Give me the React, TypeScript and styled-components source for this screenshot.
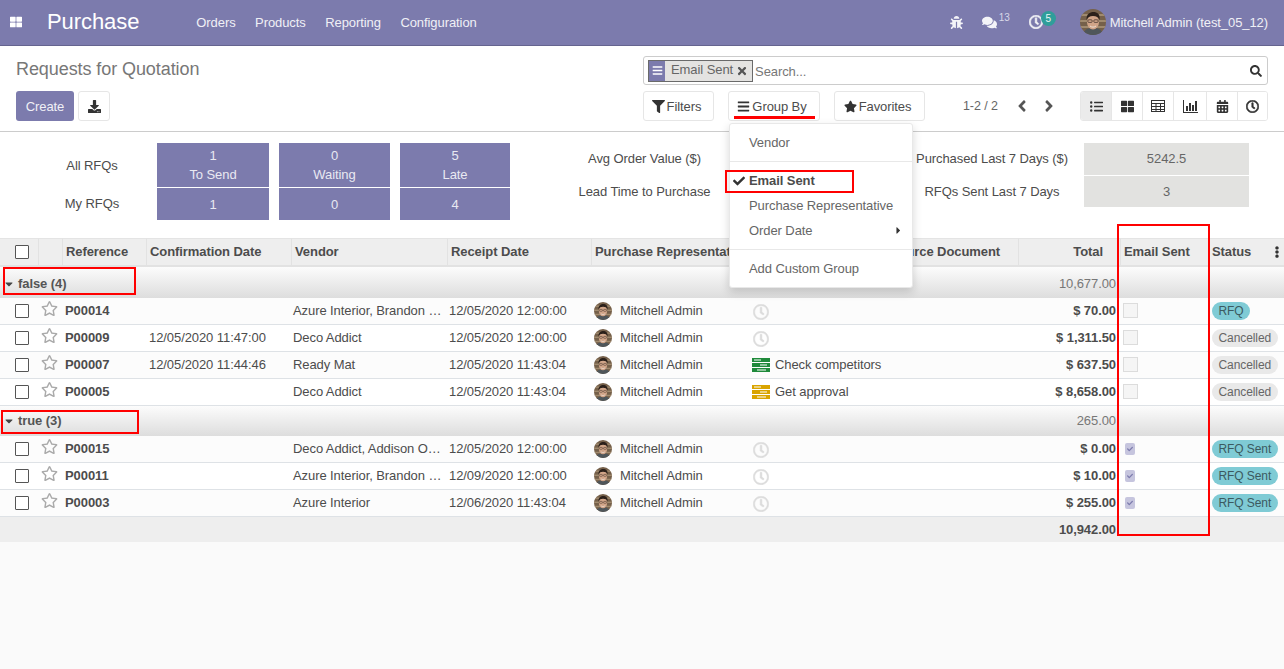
import React from 'react';
import styled, { createGlobalStyle } from 'styled-components';
import {
  FaAngleLeft,
  FaAngleRight,
  FaBars,
  FaBug,
  FaCalendarAlt,
  FaCaretDown,
  FaCaretRight,
  FaCheck,
  FaComments,
  FaDownload,
  FaEllipsisV,
  FaFilter,
  FaListUl,
  FaRegClock,
  FaRegStar,
  FaSearch,
  FaStar,
  FaThLarge,
  FaTimes,
} from 'react-icons/fa';

const PURPLE = '#7c7bad';

const GlobalStyle = createGlobalStyle`
  html, body {
    margin: 0;
    padding: 0;
    background: #fafafa;
    font-family: "Liberation Sans", Arial, sans-serif;
    font-size: 13px;
    letter-spacing: -0.08px;
    color: #4c4c4c;
  }
  * { box-sizing: border-box; }
`;

const Page = styled.div`
  position: relative;
  width: 1284px;
  height: 669px;
  overflow: hidden;
`;

const Navbar = styled.header`
  display: flex;
  align-items: center;
  height: 46px;
  padding: 0 16px 1px 10px;
  background: ${PURPLE};
  border-bottom: 1px solid #65648f;
  color: #fff;
`;

const AppsIcon = styled(FaThLarge)`
  font-size: 12px;
  width: 12px;
  flex: none;
`;

const Brand = styled.span`
  margin: 0 57px 0 25px;
  font-size: 22px;
  line-height: 1;
`;

const NavMenu = styled.nav`
  display: flex;
  gap: 19.500px;
  color: #f0f0f6;
`;

const NavRight = styled.div`
  display: flex;
  align-items: center;
  margin-left: auto;
  color: #f4f4f8;
`;

const NavIcon = styled.span<{ $w: number; $size: number }>`
  display: flex;
  align-items: center;
  position: relative;
  width: ${p => p.$w}px;
  font-size: ${p => p.$size}px;
`;

const Sup = styled.span`
  margin: -9px 0 0 2px;
  font-size: 10px;
  color: #d8d8e8;
`;

const BoldClock = styled(FaRegClock)`
  stroke: currentColor;
  stroke-width: 24px;
`;

const Badge = styled.span`
  position: absolute;
  left: 12px;
  top: -4px;
  width: 15px;
  height: 15px;
  border-radius: 50%;
  background: #2f9e9a;
  color: #e8f6f5;
  font-size: 10px;
  line-height: 15px;
  text-align: center;
`;

const UserName = styled.span`
  margin-left: 4px;
  color: #f0f0f6;
`;

const AvatarSvg = styled.svg`
  display: block;
  flex: none;
  border-radius: 50%;
`;

const Avatar = ({ size }: { size: number }) => (
  <AvatarSvg width={size} height={size} viewBox="0 0 26 26">
    <rect width="26" height="26" fill="#75604a" />
    <rect x="0" y="5" width="26" height="2" fill="#a08a6e" />
    <rect x="0" y="11" width="26" height="2" fill="#a08a6e" />
    <rect x="0" y="17" width="26" height="2" fill="#a08a6e" />
    <path d="M3 26c1-6 5-7 10-7s9 1 10 7z" fill="#4f565a" />
    <ellipse cx="13" cy="13" rx="6" ry="7.600" fill="#d0a488" />
    <path d="M6.600 11C6 5 10 3 13.500 3s7 2 6 8c-1-3-3-4-6.500-4S8 8 6.600 11z" fill="#2b201a" />
    <rect x="7.800" y="10.800" width="4.400" height="2.600" rx="1" fill="none" stroke="#3a2d26" strokeWidth="0.700" />
    <rect x="13.800" y="10.800" width="4.400" height="2.600" rx="1" fill="none" stroke="#3a2d26" strokeWidth="0.700" />
    <path d="M10 17c2 1.500 4 1.500 6 0" fill="none" stroke="#f4efe9" strokeWidth="0.800" />
  </AvatarSvg>
);

const ControlPanel = styled.section`
  display: grid;
  grid-template-columns: 627px 625px;
  height: 86px;
  padding: 10px 16px 0;
  background: #fff;
  border-bottom: 1px solid #ccc;
`;

const LeftColumn = styled.div`
  display: flex;
  flex-direction: column;
`;

const Title = styled.h1`
  margin: 0;
  height: 35px;
  padding-top: 3px;
  font-size: 18px;
  line-height: 20px;
  font-weight: normal;
  color: #777;
`;

const ButtonRow = styled.div`
  display: flex;
  align-items: center;
  gap: 4px;
`;

const PrimaryButton = styled.button`
  width: 58px;
  height: 30px;
  padding: 0;
  border: none;
  border-radius: 3px;
  background: ${PURPLE};
  color: #f0f0f6;
  font: inherit;
  letter-spacing: inherit;
`;

const Button = styled.button<{ $w: number }>`
  position: relative;
  display: flex;
  align-items: center;
  justify-content: center;
  gap: 2px;
  width: ${p => p.$w}px;
  height: 30px;
  padding: 0;
  border: 1px solid #e6e6e6;
  border-radius: 3px;
  background: #fff;
  color: #4c4c4c;
  font: inherit;
  letter-spacing: inherit;
  svg { font-size: 13px; color: #333; }
`;

const FilterButton = styled(Button)`
  padding-right: 4px;
`;

const SearchBox = styled.div`
  display: flex;
  align-items: center;
  height: 29px;
  padding: 0 4px;
  margin-bottom: 6px;
  background: #fff;
  border: 1px solid #ccc;
  border-radius: 3px;
`;

const Facet = styled.div`
  display: flex;
  align-items: stretch;
  height: 22px;
  border: 1px solid #6a6a6a;
  flex: none;
`;

const FacetIcon = styled.span`
  display: flex;
  align-items: center;
  justify-content: center;
  width: 16px;
  background: ${PURPLE};
  color: #fff;
  font-size: 11px;
`;

const FacetValue = styled.span`
  display: flex;
  align-items: center;
  gap: 3px;
  padding: 0 4px 2px 6px;
  background: #e4e3e1;
  color: #666;
  svg { font-size: 12px; margin-top: 3px; color: #555; }
`;

const SearchInput = styled.input`
  flex: 1;
  min-width: 0;
  height: 22px;
  padding: 2px 0 0 2px;
  border: none;
  outline: none;
  background: transparent;
  font: inherit;
  letter-spacing: inherit;
  &::placeholder { color: #777; opacity: 1; }
`;

const SearchIcon = styled(FaSearch)`
  margin-right: 1px;
  font-size: 12px;
  color: #333;
`;

const Controls = styled.div`
  display: flex;
  align-items: center;
`;

const FilterGroup = styled.div`
  display: flex;
  gap: 14px;
`;

const Pager = styled.div`
  display: flex;
  align-items: center;
  margin: 0 0 0 38px;
  color: #666;
  svg { font-size: 18px; color: #555; }
`;

const PagerText = styled.span`
  width: 36px;
  margin-right: 14px;
  font-size: 12.500px;
  white-space: nowrap;
  padding-bottom: 1px;
`;

const PagerArrow = styled.span`
  display: flex;
  width: 27px;
`;

const Underline = styled.span`
  position: absolute;
  left: 5px;
  right: 4px;
  bottom: 1px;
  height: 3px;
  background: #f00;
`;

const ViewSwitcher = styled.div`
  display: flex;
  margin-left: auto;
  height: 30px;
  border: 1px solid #e6e6e6;
  border-radius: 3px;
  overflow: hidden;
`;

const ViewButton = styled.span<{ $w: number; $active?: boolean }>`
  display: flex;
  align-items: center;
  justify-content: center;
  width: ${p => p.$w}px;
  background: ${p => (p.$active ? '#ebebeb' : '#fff')};
  border-right: 1px solid #e6e6e6;
  color: #333;
  font-size: 13px;
  &:last-child { border-right: none; }
`;

const TableGlyph = () => (
  <svg width="14" height="12" viewBox="0 0 14 12" fill="none" stroke="#333" strokeWidth="1">
    <rect x="0.500" y="0.500" width="13" height="11" />
    <path d="M0 3.500h14M0 6.500h14M0 9.500h14M5 3v9M9.500 3v9" />
  </svg>
);

const ChartGlyph = () => (
  <svg width="15" height="13" viewBox="0 0 15 13" fill="#333">
    <rect x="0" y="0" width="1" height="13" />
    <rect x="0" y="12" width="15" height="1" />
    <rect x="3" y="6" width="2" height="5" />
    <rect x="6" y="3" width="2" height="8" />
    <rect x="9" y="5" width="2" height="6" />
    <rect x="12" y="1" width="2" height="10" />
  </svg>
);

const Menu = styled.div`
  position: absolute;
  top: 31px;
  left: 0;
  z-index: 5;
  width: 184px;
  height: 165px;
  padding: 6px 0;
  background: #fff;
  border: 1px solid #e8e8e8;
  border-radius: 3px;
  box-shadow: 0 4px 10px rgba(0, 0, 0, 0.16);
  text-align: left;
`;

const MenuItem = styled.div<{ $selected?: boolean }>`
  position: relative;
  display: flex;
  align-items: center;
  height: 25px;
  padding-left: 19px;
  font-weight: ${p => (p.$selected ? 'bold' : 'normal')};
  color: ${p => (p.$selected ? '#4c4c4c' : '#666')};
`;

const MenuDivider = styled.div`
  height: 1px;
  margin: 6px 0;
  background: #e8e8e8;
`;

const MenuCheck = styled(FaCheck)`
  position: absolute;
  left: 3px;
  top: 7px;
  color: #4c4c4c;
  && { font-size: 12px; }
`;

const MenuCaret = styled(FaCaretRight)`
  position: absolute;
  right: 8px;
  top: 7px;
  color: #555;
  && { font-size: 11px; }
`;

const Dashboard = styled.section`
  display: flex;
  height: 106px;
  padding-top: 11px;
  background: #fff;
`;

const RfqGrid = styled.div`
  display: grid;
  grid-template-columns: 147px 112px 111px 110px;
  grid-template-rows: 44px 32px;
  column-gap: 10px;
  row-gap: 1px;
  width: 540px;
`;

const RfqLabel = styled.div<{ $lift?: number }>`
  display: flex;
  align-items: center;
  justify-content: center;
  padding: 0 0 ${p => p.$lift ?? 0}px 37px;
`;

const RfqCell = styled.div`
  display: flex;
  flex-direction: column;
  align-items: center;
  justify-content: center;
  background: ${PURPLE};
  color: #e9e9f2;
  line-height: 19px;
`;

const StatsGrid = styled.div`
  display: grid;
  grid-template-columns: 209px 151px 184px 165px;
  grid-template-rows: 32px 31px;
  row-gap: 1px;
`;

const StatLabel = styled.div<{ $lift?: number }>`
  display: flex;
  align-items: center;
  justify-content: center;
  padding-bottom: ${p => p.$lift ?? 0}px;
`;

const StatValue = styled(StatLabel)`
  background: #e2e2e0;
  color: #666;
`;

const Table = styled.table`
  width: 1284px;
  table-layout: fixed;
  border-collapse: separate;
  border-spacing: 0;
`;

const HeadCell = styled.th<{ $right?: boolean; $pad?: number }>`
  height: 29px;
  padding: 0 ${p => p.$pad ?? 3}px 1px 3px;
  background: #eee;
  border-top: 1px solid #e4e4e4;
  border-bottom: 2px solid #e2e2e2;
  border-left: 1px solid #e2e2e2;
  font-weight: bold;
  text-align: ${p => (p.$right ? 'right' : 'left')};
  white-space: nowrap;
  overflow: hidden;
  color: #4c4c4c;
  &:first-child { border-left: none; padding-left: 0; }
`;

const HeadInner = styled.div`
  display: flex;
  justify-content: space-between;
  align-items: center;
`;

const Kebab = styled(FaEllipsisV)`
  font-size: 12px;
  color: #333;
`;

const GroupRow = styled.tr<{ $h: number }>`
  height: ${p => p.$h}px;
  background: linear-gradient(#fcfcfc, #dddddd);
  td { padding-bottom: ${p => (p.$h > 30 ? 0 : 2)}px; }
`;

const GroupName = styled.td`
  padding-left: 3px;
  font-weight: bold;
  color: #555;
  svg { font-size: 12px; margin-right: 3px; vertical-align: -2px; color: #444; }
`;

const GroupTotal = styled.td`
  padding-right: 4px;
  text-align: right;
  color: #777;
`;

const Row = styled.tr<{ $odd: boolean }>`
  height: 27px;
  background: ${p => (p.$odd ? '#fcfcfc' : '#fff')};
`;

const Cell = styled.td<{ $right?: boolean; $bold?: boolean; $pad?: number }>`
  padding: 0 ${p => p.$pad ?? 4}px 1px ${p => p.$pad ?? 2}px;
  border-bottom: 1px solid #dee2e6;
  font-weight: ${p => (p.$bold ? 'bold' : 'normal')};
  text-align: ${p => (p.$right ? 'right' : 'left')};
  white-space: nowrap;
  overflow: hidden;
  text-overflow: ellipsis;
`;

const RefCell = styled(Cell)`
  padding-left: 3px;
`;

const Tick = styled.span`
  display: block;
  width: 14px;
  height: 14px;
  margin: 0 0 0 15px;
  background: #fff;
  border: 1px solid #555;
  border-radius: 1px;
`;

const Star = styled(FaRegStar)`
  display: block;
  margin: -5px 0 0 3px;
  font-size: 17px;
  color: #aaa;
`;

const Person = styled.div`
  display: flex;
  align-items: center;
  gap: 8px;
  padding-left: 1px;
`;

const Activity = styled.div`
  display: flex;
  align-items: center;
  gap: 5px;
  padding-left: 2px;
`;

const ClockIcon = styled(FaRegClock)`
  margin: 2px 0 0 1px;
  font-size: 16px;
  color: #dcdcdc;
  stroke: currentColor;
  stroke-width: 16px;
`;

const Empty = styled.span`
  display: block;
  width: 15px;
  height: 15px;
  margin-left: 1px;
  background: #f5f5f5;
  border: 1px solid #dcdcdc;
`;

const Checked = styled.span`
  display: flex;
  align-items: center;
  justify-content: center;
  width: 10px;
  height: 12px;
  margin-left: 3px;
  background: #c6c5de;
  border-radius: 2px;
  color: ${PURPLE};
  font-size: 6px;
`;

const Pill = styled.span<{ $sent: boolean }>`
  display: inline-block;
  height: 18px;
  padding: 0 6.500px;
  border-radius: 9px;
  background: ${p => (p.$sent ? '#7fcbd5' : '#e9e9e9')};
  color: ${p => (p.$sent ? '#3c5a60' : '#666')};
  font-size: 12px;
  line-height: 18px;
`;

const StatusCell = styled(Cell)`
  padding: 0 0 1px 4px;
  overflow: visible;
`;

const FootRow = styled.tr`
  height: 25px;
  background: #eee;
`;

const FootTotal = styled.td`
  padding: 0 4px 0 0;
  text-align: right;
  font-weight: bold;
`;

// the red annotations drawn on top of the screenshot
const Marker = styled.div<{ $x: number; $y: number; $w: number; $h: number }>`
  position: absolute;
  left: ${p => p.$x}px;
  top: ${p => p.$y}px;
  width: ${p => p.$w}px;
  height: ${p => p.$h}px;
  border: 2px solid #f00;
  pointer-events: none;
  z-index: 6;
`;

const TaskIcon = ({ color }: { color: string }) => (
  <svg width="18" height="14" viewBox="0 0 18 14">
    <rect width="18" height="4" fill={color} />
    <rect y="5" width="18" height="4" fill={color} />
    <rect y="10" width="18" height="4" fill={color} />
    <rect x="2" y="1.500" width="7" height="1" fill="#fff" />
    <rect x="8" y="6.500" width="7" height="1" fill="#fff" />
    <rect x="5" y="11.500" width="9" height="1" fill="#fff" />
  </svg>
);

interface Order {
  ref: string;
  confirmed?: string;
  vendor: string;
  receipt: string;
  activity?: { label: string; color: string };
  total: string;
  sent: boolean;
  status: string;
}

const notSent: Order[] = [
  { ref: 'P00014', vendor: 'Azure Interior, Brandon Freeman', receipt: '12/05/2020 12:00:00', total: '$ 70.00', sent: false, status: 'RFQ' },
  { ref: 'P00009', confirmed: '12/05/2020 11:47:00', vendor: 'Deco Addict', receipt: '12/05/2020 12:00:00', total: '$ 1,311.50', sent: false, status: 'Cancelled' },
  { ref: 'P00007', confirmed: '12/05/2020 11:44:46', vendor: 'Ready Mat', receipt: '12/05/2020 11:43:04', activity: { label: 'Check competitors', color: '#1f8a3b' }, total: '$ 637.50', sent: false, status: 'Cancelled' },
  { ref: 'P00005', vendor: 'Deco Addict', receipt: '12/05/2020 11:43:04', activity: { label: 'Get approval', color: '#d9a400' }, total: '$ 8,658.00', sent: false, status: 'Cancelled' },
];

const sent: Order[] = [
  { ref: 'P00015', vendor: 'Deco Addict, Addison Olson', receipt: '12/05/2020 12:00:00', total: '$ 0.00', sent: true, status: 'RFQ Sent' },
  { ref: 'P00011', vendor: 'Azure Interior, Brandon Freeman', receipt: '12/09/2020 12:00:00', total: '$ 10.00', sent: true, status: 'RFQ Sent' },
  { ref: 'P00003', vendor: 'Azure Interior', receipt: '12/06/2020 11:43:04', total: '$ 255.00', sent: true, status: 'RFQ Sent' },
];

const columnWidths = [38, 24, 84, 145, 156, 144, 157, 138, 132, 102, 88, 76];

const OrderRow = ({ order, index }: { order: Order; index: number }) => (
  <Row $odd={index % 2 === 0}>
    <Cell $pad={0}><Tick /></Cell>
    <Cell $pad={0}><Star /></Cell>
    <RefCell $bold>{order.ref}</RefCell>
    <RefCell>{order.confirmed}</RefCell>
    <Cell>{order.vendor}</Cell>
    <Cell>{order.receipt}</Cell>
    <Cell>
      <Person>
        <Avatar size={18} />
        Mitchell Admin
      </Person>
    </Cell>
    <Cell colSpan={2}>
      <Activity>
        {order.activity ? <TaskIcon color={order.activity.color} /> : <ClockIcon />}
        {order.activity?.label}
      </Activity>
    </Cell>
    <Cell $right $bold>{order.total}</Cell>
    <Cell>
      {order.sent ? <Checked><FaCheck /></Checked> : <Empty />}
    </Cell>
    <StatusCell>
      <Pill $sent={order.status !== 'Cancelled'}>{order.status}</Pill>
    </StatusCell>
  </Row>
);

export default function App() {
  return (
    <Page>
      <GlobalStyle />
      <Navbar>
        <AppsIcon />
        <Brand>Purchase</Brand>
        <NavMenu>
          <span>Orders</span>
          <span>Products</span>
          <span>Reporting</span>
          <span>Configuration</span>
        </NavMenu>
        <NavRight>
          <NavIcon $w={32} $size={13}><FaBug /></NavIcon>
          <NavIcon $w={47} $size={15}>
            <FaComments />
            <Sup>13</Sup>
          </NavIcon>
          <NavIcon $w={51} $size={14}>
            <BoldClock />
            <Badge>5</Badge>
          </NavIcon>
          <Avatar size={26} />
          <UserName>Mitchell Admin (test_05_12)</UserName>
        </NavRight>
      </Navbar>

      <ControlPanel>
        <LeftColumn>
          <Title>Requests for Quotation</Title>
          <ButtonRow>
            <PrimaryButton>Create</PrimaryButton>
            <Button $w={32}><FaDownload /></Button>
          </ButtonRow>
        </LeftColumn>
        <div>
          <SearchBox>
            <Facet>
              <FacetIcon><FaBars /></FacetIcon>
              <FacetValue>Email Sent <FaTimes /></FacetValue>
            </Facet>
            <SearchInput placeholder="Search..." readOnly />
            <SearchIcon />
          </SearchBox>
          <Controls>
            <FilterGroup>
              <FilterButton $w={71}><FaFilter />Filters</FilterButton>
              <FilterButton $w={92}>
                <FaBars />Group By
                <Underline />
                <Menu>
                  <MenuItem>Vendor</MenuItem>
                  <MenuDivider />
                  <MenuItem $selected>
                    <MenuCheck />
                    Email Sent
                  </MenuItem>
                  <MenuItem>Purchase Representative</MenuItem>
                  <MenuItem>
                    Order Date
                    <MenuCaret />
                  </MenuItem>
                  <MenuDivider />
                  <MenuItem>Add Custom Group</MenuItem>
                </Menu>
              </FilterButton>
              <FilterButton $w={91}><FaStar />Favorites</FilterButton>
            </FilterGroup>
            <Pager>
              <PagerText>1-2 / 2</PagerText>
              <PagerArrow><FaAngleLeft /></PagerArrow>
              <PagerArrow><FaAngleRight /></PagerArrow>
            </Pager>
            <ViewSwitcher>
              <ViewButton $w={31} $active><FaListUl /></ViewButton>
              <ViewButton $w={31}><FaThLarge /></ViewButton>
              <ViewButton $w={31}><TableGlyph /></ViewButton>
              <ViewButton $w={33}><ChartGlyph /></ViewButton>
              <ViewButton $w={31}><FaCalendarAlt /></ViewButton>
              <ViewButton $w={29}><BoldClock /></ViewButton>
            </ViewSwitcher>
          </Controls>
        </div>
      </ControlPanel>

      <Dashboard>
        <RfqGrid>
          <RfqLabel>All RFQs</RfqLabel>
          <RfqCell><span>1</span><span>To Send</span></RfqCell>
          <RfqCell><span>0</span><span>Waiting</span></RfqCell>
          <RfqCell><span>5</span><span>Late</span></RfqCell>
          <RfqLabel $lift={2}>My RFQs</RfqLabel>
          <RfqCell>1</RfqCell>
          <RfqCell>0</RfqCell>
          <RfqCell>4</RfqCell>
        </RfqGrid>
        <StatsGrid>
          <StatLabel $lift={2}>Avg Order Value ($)</StatLabel>
          <StatValue />
          <StatLabel $lift={2}>Purchased Last 7 Days ($)</StatLabel>
          <StatValue $lift={2}>5242.5</StatValue>
          <StatLabel>Lead Time to Purchase</StatLabel>
          <StatValue />
          <StatLabel>RFQs Sent Last 7 Days</StatLabel>
          <StatValue>3</StatValue>
        </StatsGrid>
      </Dashboard>

      <Table>
        <colgroup>
          {columnWidths.map((w, i) => (
            <col key={i} width={w} />
          ))}
        </colgroup>
        <thead>
          <tr>
            <HeadCell><Tick /></HeadCell>
            <HeadCell />
            <HeadCell>Reference</HeadCell>
            <HeadCell>Confirmation Date</HeadCell>
            <HeadCell>Vendor</HeadCell>
            <HeadCell>Receipt Date</HeadCell>
            <HeadCell>Purchase Representative</HeadCell>
            <HeadCell>Next Activity</HeadCell>
            <HeadCell>Source Document</HeadCell>
            <HeadCell $right $pad={17}>Total</HeadCell>
            <HeadCell>Email Sent</HeadCell>
            <HeadCell $pad={1}>
              <HeadInner>Status <Kebab /></HeadInner>
            </HeadCell>
          </tr>
        </thead>
        <tbody>
          <GroupRow $h={31}>
            <GroupName colSpan={9}><FaCaretDown />false (4)</GroupName>
            <GroupTotal>10,677.00</GroupTotal>
            <td colSpan={2} />
          </GroupRow>
          {notSent.map((order, i) => (
            <OrderRow key={order.ref} order={order} index={i} />
          ))}
          <GroupRow $h={30}>
            <GroupName colSpan={9}><FaCaretDown />true (3)</GroupName>
            <GroupTotal>265.00</GroupTotal>
            <td colSpan={2} />
          </GroupRow>
          {sent.map((order, i) => (
            <OrderRow key={order.ref} order={order} index={i} />
          ))}
        </tbody>
        <tfoot>
          <FootRow>
            <td colSpan={9} />
            <FootTotal>10,942.00</FootTotal>
            <td colSpan={2} />
          </FootRow>
        </tfoot>
      </Table>

      <Marker $x={725} $y={170} $w={129} $h={23} />
      <Marker $x={3} $y={267} $w={133} $h={28} />
      <Marker $x={1} $y={410} $w={138} $h={24} />
      <Marker $x={1117} $y={224} $w={93} $h={312} />
    </Page>
  );
}
